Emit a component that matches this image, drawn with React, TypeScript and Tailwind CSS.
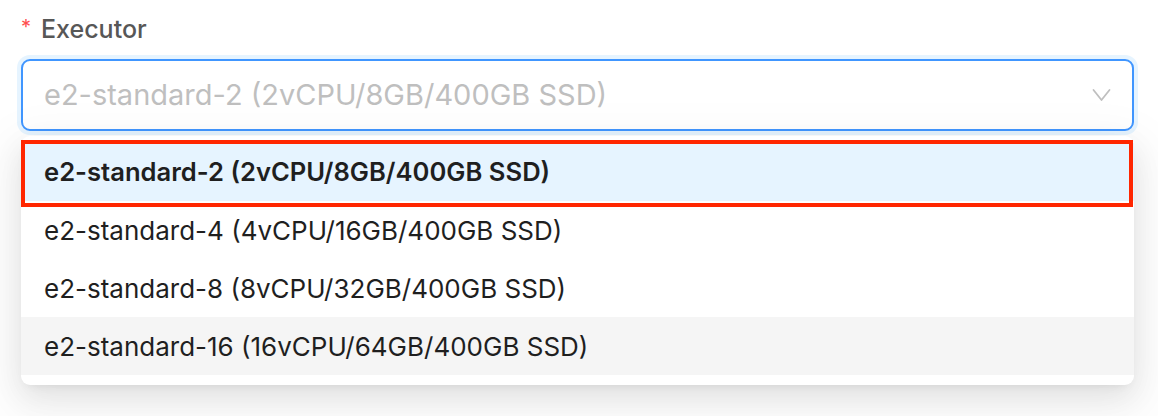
import React from "react";

const options = [
  "e2-standard-2 (2vCPU/8GB/400GB SSD)",
  "e2-standard-4 (4vCPU/16GB/400GB SSD)",
  "e2-standard-8 (8vCPU/32GB/400GB SSD)",
  "e2-standard-16 (16vCPU/64GB/400GB SSD)",
];

export default function App() {
  return (
    <div
      className="w-[1158px] h-[416px] bg-white pl-[21px] pr-[24px] pt-[9px] overflow-hidden"
      style={{ fontFamily: "Inter, 'Noto Sans', sans-serif" }}
    >
      <div className="flex items-center h-[40px] text-[25px] leading-[40px]">
        <span className="text-[#ff4d4f] text-[20px] mr-[10px] relative top-[-2px]">*</span>
        <span className="text-[#575757] font-medium">Executor</span>
      </div>
      <div className="mt-[10px] h-[72px] rounded-[9px] border-2 border-[#4096ff] shadow-[0_0_0_4px_rgba(5,145,255,0.1)] flex items-center pl-[21px] pr-[20px] bg-white">
        <span className="flex-1 text-[29px] text-[#bfbfbf] whitespace-nowrap">
          e2-standard-2 (2vCPU/8GB/400GB SSD)
        </span>
        <svg width="19" height="14" viewBox="0 0 19 14" className="mr-[1px]">
          <polyline
            points="1.5,2 9.5,12 17.5,2"
            fill="none"
            stroke="#bfbfbf"
            strokeWidth="1.8"
            strokeLinecap="round"
            strokeLinejoin="round"
          />
        </svg>
      </div>
      <div className="relative mt-[5px] bg-white rounded-[9px] pt-[7px] pb-[10px] shadow-[0_11px_29px_0_rgba(0,0,0,0.08),0_5px_11px_-7px_rgba(0,0,0,0.12),0_16px_50px_14px_rgba(0,0,0,0.05)]">
        {options.map((o, i) => (
          <div
            key={o}
            className={
              "h-[58px] flex items-center pl-[23px] whitespace-nowrap " +
              (i === 0
                ? "bg-[#e6f4ff] font-semibold text-[25.6px] text-[#1f1f1f]"
                : i === 3
                ? "bg-[#f5f5f5] text-[26px] text-[#1f1f1f]"
                : "text-[26px] text-[#1f1f1f]")
            }
          >
            {o}
          </div>
        ))}
        <div className="absolute left-0 right-[1px] top-[4px] h-[67px] border-[4px] border-[#ff2600] pointer-events-none" />
      </div>
    </div>
  );
}
